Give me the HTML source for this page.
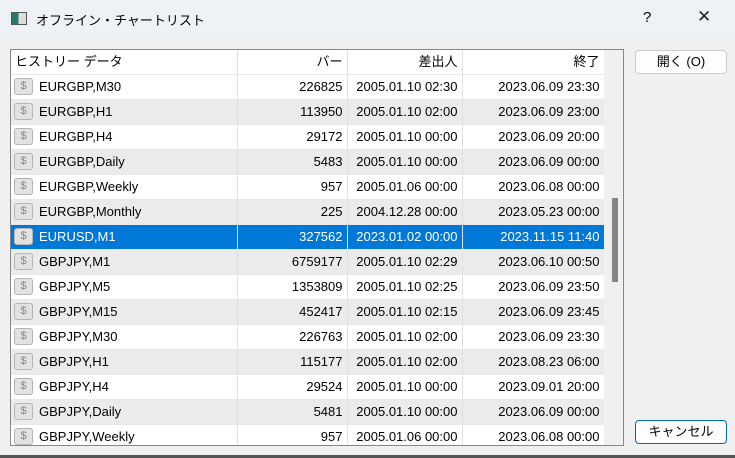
<!DOCTYPE html>
<html><head><meta charset="utf-8"><style>
*{margin:0;padding:0;box-sizing:border-box}
body{width:735px;height:458px;background:#f0f0f0;font-family:"Liberation Sans","Noto Sans CJK JP",sans-serif;font-size:13px;color:#000;position:relative;overflow:hidden}
.title{position:absolute;left:0;top:0;width:735px;height:38px;background:#eef2f6}
.title .t{position:absolute;left:36px;top:10px;font-size:13px}
.ico{position:absolute;left:11px;top:12px;width:16px;height:13px;border:1px solid #555;background:linear-gradient(90deg,#2a7a6a 0 45%,#ddd 45%)}
.q{position:absolute;left:643px;top:9px;font-size:15px}
.x{position:absolute;left:697px;top:7px;font-size:17px;font-weight:300;color:#222}
.grid{position:absolute;left:10px;top:49px;width:614px;height:397px;border:1px solid #828790;background:#fff;overflow:hidden}
table{border-collapse:collapse;position:absolute;left:0;top:0;width:593px;table-layout:fixed}
td,th{height:25px;font-weight:normal;white-space:nowrap;padding:0 4px;border-right:1px solid #e0e0e0;border-bottom:1px solid #e8e8e8;vertical-align:middle;line-height:24px;overflow:hidden}
th{height:24px;text-align:right;font-size:13px}
th:first-child{text-align:left}
td{text-align:right}
td:first-child{text-align:left;padding-left:3px}
.n{position:relative;height:24px;padding-left:25px}
tr.g td{background:#ebebeb}
tr.s td{background:#0078d7;color:#fff}
.d{position:absolute;left:0;top:3px;width:19px;height:17px;border:1px solid #b5b5b5;border-radius:3px;background:#e2e2e2;text-align:center;font-size:11px;line-height:15px;color:#888}
.sb{position:absolute;left:593px;top:0;width:19px;height:397px;background:#f0f0f0}
.th{position:absolute;left:8px;top:148px;width:6px;height:84px;background:#858585}
.btn{position:absolute;left:635px;width:92px;height:24px;background:#fdfdfd;border:1px solid #ccc;border-radius:4px;text-align:center;line-height:22px;font-size:13px}
.btn2{border:1px solid #0067c0}
.bot{position:absolute;left:0;top:455px;width:735px;height:3px;background:#555}
</style></head><body>
<div class="title"><div class="ico"></div><div class="t">オフライン・チャートリスト</div><div class="q">?</div><div class="x">✕</div></div>
<div class="grid">
<table>
<colgroup><col style="width:226px"><col style="width:110px"><col style="width:115px"><col style="width:142px"></colgroup>
<tr><th>ヒストリー データ</th><th>バー</th><th>差出人</th><th>終了</th></tr>
<tr><td><div class="n"><span class="d">$</span>EURGBP,M30</div></td><td>226825</td><td>2005.01.10 02:30</td><td>2023.06.09 23:30</td></tr>
<tr class="g"><td><div class="n"><span class="d">$</span>EURGBP,H1</div></td><td>113950</td><td>2005.01.10 02:00</td><td>2023.06.09 23:00</td></tr>
<tr><td><div class="n"><span class="d">$</span>EURGBP,H4</div></td><td>29172</td><td>2005.01.10 00:00</td><td>2023.06.09 20:00</td></tr>
<tr class="g"><td><div class="n"><span class="d">$</span>EURGBP,Daily</div></td><td>5483</td><td>2005.01.10 00:00</td><td>2023.06.09 00:00</td></tr>
<tr><td><div class="n"><span class="d">$</span>EURGBP,Weekly</div></td><td>957</td><td>2005.01.06 00:00</td><td>2023.06.08 00:00</td></tr>
<tr class="g"><td><div class="n"><span class="d">$</span>EURGBP,Monthly</div></td><td>225</td><td>2004.12.28 00:00</td><td>2023.05.23 00:00</td></tr>
<tr class="s"><td><div class="n"><span class="d">$</span>EURUSD,M1</div></td><td>327562</td><td>2023.01.02 00:00</td><td>2023.11.15 11:40</td></tr>
<tr class="g"><td><div class="n"><span class="d">$</span>GBPJPY,M1</div></td><td>6759177</td><td>2005.01.10 02:29</td><td>2023.06.10 00:50</td></tr>
<tr><td><div class="n"><span class="d">$</span>GBPJPY,M5</div></td><td>1353809</td><td>2005.01.10 02:25</td><td>2023.06.09 23:50</td></tr>
<tr class="g"><td><div class="n"><span class="d">$</span>GBPJPY,M15</div></td><td>452417</td><td>2005.01.10 02:15</td><td>2023.06.09 23:45</td></tr>
<tr><td><div class="n"><span class="d">$</span>GBPJPY,M30</div></td><td>226763</td><td>2005.01.10 02:00</td><td>2023.06.09 23:30</td></tr>
<tr class="g"><td><div class="n"><span class="d">$</span>GBPJPY,H1</div></td><td>115177</td><td>2005.01.10 02:00</td><td>2023.08.23 06:00</td></tr>
<tr><td><div class="n"><span class="d">$</span>GBPJPY,H4</div></td><td>29524</td><td>2005.01.10 00:00</td><td>2023.09.01 20:00</td></tr>
<tr class="g"><td><div class="n"><span class="d">$</span>GBPJPY,Daily</div></td><td>5481</td><td>2005.01.10 00:00</td><td>2023.06.09 00:00</td></tr>
<tr><td><div class="n"><span class="d">$</span>GBPJPY,Weekly</div></td><td>957</td><td>2005.01.06 00:00</td><td>2023.06.08 00:00</td></tr>
</table>
<div class="sb"><div class="th"></div></div>
</div>
<div class="btn" style="top:50px">開く (O)</div>
<div class="btn btn2" style="top:420px">キャンセル</div>
<div class="bot"></div>
</body></html>
